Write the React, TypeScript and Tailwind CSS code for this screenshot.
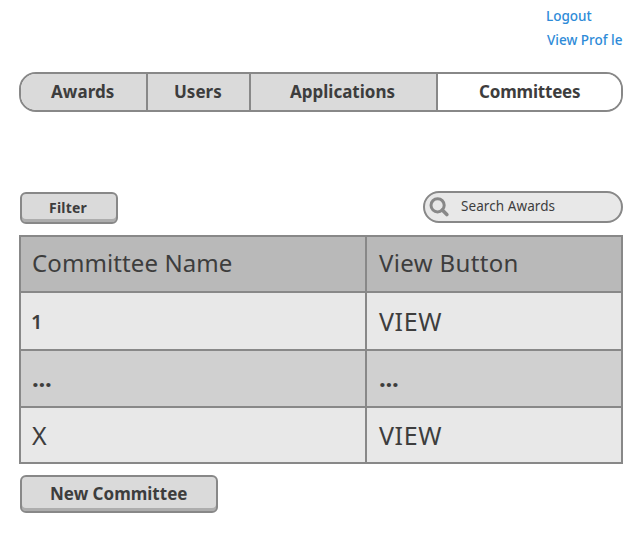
import React from 'react';

const tabs = [
  { label: 'Awards', box: 'w-[127px] pl-[30px] bg-[#dadada] border-r-2', text: 'tracking-[0.05px]' },
  { label: 'Users', box: 'w-[103px] pl-[26px] bg-[#dadada] border-r-2', text: '' },
  { label: 'Applications', box: 'w-[187px] pl-[39px] bg-[#dadada] border-r-2', text: '' },
  { label: 'Committees', box: 'flex-1 pl-[41px] bg-white', text: 'tracking-[-0.2px]' },
];

const rows = [
  { name: '1', view: 'VIEW', box: 'h-[58px] bg-[#e8e8e8]', nameText: 'text-[20px] font-semibold pt-[2px] -ml-px', viewText: 'text-[25px] tracking-[0.6px]' },
  { name: '...', view: '...', box: 'h-[57px] bg-[#d0d0d0]', nameText: 'font-bold tracking-[-0.3px] -mt-px', viewText: 'font-bold tracking-[-0.3px] -mt-px' },
  { name: 'X', view: 'VIEW', box: 'h-[56px] bg-[#e8e8e8]', nameText: 'text-[25px]', viewText: 'text-[25px] tracking-[0.6px]' },
];

export default function App() {
  return (
    <div className="flex h-[534px] w-[642px] flex-col bg-white pr-[19px] pl-[19px] font-['Noto_Sans',sans-serif] text-[#3d3d3d]">
      <div className="flex h-[72px] flex-col pt-[4px] pl-[527px] text-[13.5px] leading-[24px] font-medium whitespace-nowrap text-[#2e8bd8]">
        <a>Logout</a>
        <a className="pl-px">View Prof le</a>
      </div>

      <nav className="flex h-[40px] shrink-0 overflow-hidden rounded-[17px] border-2 border-[#888888] text-[17px] font-bold">
        {tabs.map((t) => (
          <div key={t.label} className={`flex items-center border-[#888888] ${t.box}`}>
            <span className={t.text}>{t.label}</span>
          </div>
        ))}
      </nav>

      <div className="mt-[79px] flex h-[33px] shrink-0 justify-between">
        <button className="mt-px ml-px flex h-[32px] w-[98px] rounded-[6px] border-2 border-[#888888] bg-[#dadada] pt-[4px] pl-[27px] text-[14px] leading-[20px] font-bold tracking-[0.2px] shadow-[inset_0_-3px_0_#adadad]">
          Filter
        </button>
        <div className="flex h-[32px] w-[200px] items-center rounded-[16px] border-2 border-[#888888] bg-[#e8e8e8] pl-[4px]">
          <svg className="h-[20px] w-[20px] shrink-0" viewBox="0 0 20 20" fill="none" stroke="#888888">
            <circle cx="8.6" cy="8.3" r="6.6" strokeWidth="3" />
            <path d="M13.3 13 L17.8 17.5" strokeWidth="3.6" strokeLinecap="round" />
          </svg>
          <span className="-mt-[2px] pl-[12px] text-[13.5px] leading-[20px] tracking-[0.08px]">Search Awards</span>
        </div>
      </div>

      <div className="mt-[11px] flex shrink-0 flex-col border-2 border-[#888888] text-[24px] leading-[32px]">
        <div className="flex h-[54px] bg-[#b9b9b9]">
          <div className="flex w-[346px] items-center border-r-2 border-[#888888] pb-[2px] pl-[11px] tracking-[0.1px]">Committee Name</div>
          <div className="flex items-center pb-[2px] pl-[12px] tracking-[0.35px]">View Button</div>
        </div>
        {rows.map((r, i) => (
          <div key={i} className={`flex border-t-2 border-[#888888] ${r.box}`}>
            <div className="flex w-[346px] items-center border-r-2 border-[#888888] pl-[11px]">
              <span className={r.nameText}>{r.name}</span>
            </div>
            <div className="flex items-center pl-[12px]">
              <span className={r.viewText}>{r.view}</span>
            </div>
          </div>
        ))}
      </div>

      <button className="mt-[11px] ml-px flex h-[38px] w-[198px] shrink-0 rounded-[6px] border-2 border-[#888888] bg-[#dadada] pt-[5px] pl-[28px] text-[17px] leading-[24px] font-bold whitespace-nowrap shadow-[inset_0_-3px_0_#adadad]">
        New Committee
      </button>
    </div>
  );
}
